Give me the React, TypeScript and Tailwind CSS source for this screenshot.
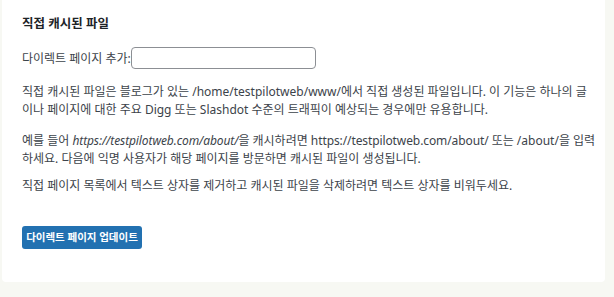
import React from "react";

export default function App() {
  return (
    <div className="w-[614px] h-[297px] bg-[#f7f8f3] overflow-hidden">
      <div className="ml-[2px] w-[603px] h-[282px] bg-white rounded-b-[4px] pl-[20px] pt-[15px] text-[#3c434a] text-[12px] leading-[17.5px] [font-family:'Noto_Sans','Noto_Sans_CJK_KR',sans-serif]">
        <h3 className="font-bold text-[#1d2327] text-[12.5px] leading-[18px]">직접 캐시된 파일</h3>
        <div className="mt-[14px] flex items-center h-[22px]">
          <label className="pt-[1px]">다이렉트 페이지 추가:</label>
          <input type="text" className="w-[185px] h-[22px] border border-[#8c8f94] rounded-[4px] bg-white" />
        </div>
        <div className="w-[575px]">
          <p className="mt-[14px]">
            직접 캐시된 파일은 블로그가 있는 /home/testpilotweb/www/에서 직접 생성된 파일입니다. 이 기능은 하나의 글이나 페이지에 대한 주요 Digg 또는 Slashdot 수준의 트래픽이 예상되는 경우에만 유용합니다.
          </p>
          <p className="mt-[14px]">
            예를 들어 <i className="tracking-[-0.1px]">https://testpilotweb.com/about/</i>을 캐시하려면 <span className="tracking-[-0.1px]">https://testpilotweb.com/about/</span> 또는 /about/을 입력하세요. 다음에 익명 사용자가 해당 페이지를 방문하면 캐시된 파일이 생성됩니다.
          </p>
          <p className="mt-[10px]">
            직접 페이지 목록에서 텍스트 상자를 제거하고 캐시된 파일을 삭제하려면 텍스트 상자를 비워두세요.
          </p>
        </div>
        <button className="mt-[31px] h-[23px] w-[120px] bg-[#2271b1] text-white text-[10.5px] font-semibold rounded-[3px] leading-[23px] whitespace-nowrap">
          다이렉트 페이지 업데이트
        </button>
      </div>
    </div>
  );
}
